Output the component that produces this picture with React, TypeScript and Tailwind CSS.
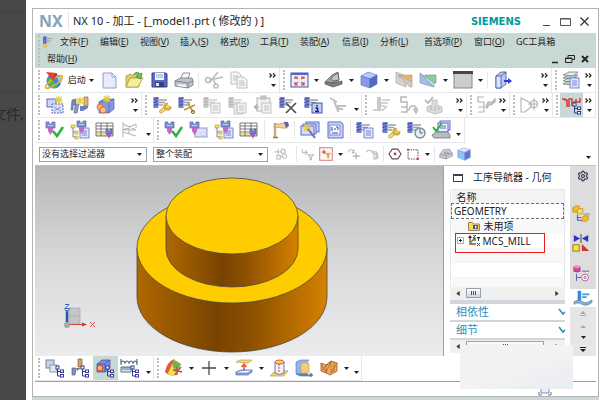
import React from 'react';
import { Settings } from 'lucide-react';

const BLUE = '#5f6ec6';
const GRAY = '#c0c0c0';

// Shared parts of the machining icons
const Mill = ({ off = false }: { off?: boolean }) => (
  <g>
    <rect x="1.5" y="2" width="5" height="11" fill={off ? '#cacaca' : '#7480cd'} />
    <path d="M1.5 4.5l5-1.5M1.5 7.5l5-1.5M1.5 10.5l5-1.5" stroke={off ? '#b2b2b2' : '#3f4ba2'} strokeWidth="1" />
    <path d="M7 5h8M7 7.5h6M7 10h4" stroke={off ? '#d0d0d0' : '#9ba0a8'} strokeWidth="1.3" />
  </g>
);

const Wrench = () => (
  <g fill="none" strokeLinecap="round">
    <path d="M9 16.5l6-5" stroke="#b8943c" strokeWidth="3.6" />
    <path d="M9 16.5l6-5" stroke="#f6da6b" strokeWidth="2.4" />
    <path d="M15 8.500a3 3 0 1 0 3.500 3.500" stroke="#d0aa40" strokeWidth="2.200" />
  </g>
);

const Holder = () => (
  <g>
    <path d="M1 2h3v2h3v-2h3v6h-9z" fill="#8490d0" stroke="#5a66a8" strokeWidth=".7" />
    <path d="M3 8h5v3l-2.500 4l-2.500-4z" fill="#c06cc4" />
    <path d="M3 5.500h5" stroke="#c3c9ef" />
  </g>
);

const Doc = ({ off = false, x = 9, y = 8 }: { off?: boolean; x?: number; y?: number }) => (
  <g stroke={off ? '#b6b6b6' : BLUE} strokeWidth=".8">
    <rect x={x} y={y} width="9" height="10" fill={off ? '#f4f4f4' : '#e3e7fa'} />
    <path d={`M${x + 2} ${y + 3}h5M${x + 2} ${y + 5}h5M${x + 2} ${y + 7}h5`} />
  </g>
);

const Tree = () => (
  <g fill="#fff" stroke="#353b94" strokeWidth="1">
    <path d="M12.500 10v8h3M12.500 13.500h3" fill="none" />
    <rect x="11" y="8" width="3" height="3" />
    <rect x="15.500" y="12" width="3" height="2.500" />
    <rect x="15.500" y="16.500" width="3" height="2.500" />
  </g>
);

const Check = () => <path d="M8 11l4 5l6-9" fill="none" stroke="#2fb344" strokeWidth="2.600" />;

const Star = ({ x = 13, y = 5 }: { x?: number; y?: number }) => (
  <path d={`M${x - 4} ${y}h8M${x} ${y - 4}v8M${x - 3} ${y - 3}l6 6M${x + 3} ${y - 3}l-6 6`} stroke="#e5cf35" strokeWidth="1.200" />
);

const Cube = () => (
  <g stroke="#5369b9" strokeWidth=".6">
    <path d="M2 6l7-4l9 3l-7 4z" fill="#b8c8fa" />
    <path d="M2 6l9 3v9l-9-3z" fill="#879ce9" />
    <path d="M11 9l7-4v9l-7 4z" fill="#5069c9" />
  </g>
);

const Grid = () => (
  <g>
    <rect x="1" y="3" width="17" height="12" fill="#fff" />
    <path d="M1 13h17v3h-17z" fill="#f1e275" />
    <path d="M1 3h17M1 6h17M1 9h17M1 12h17M1 16h17M1 3v13M6 3v13M12 3v13M18 3v13" stroke="#6b6b6b" strokeWidth=".9" />
    <path d="M11 9h2v2h2v-2h2v5h-6z" fill="#7583c5" stroke="#48549b" strokeWidth=".6" />
    <path d="M12 14h4l-2 5z" fill="#b84ec4" />
  </g>
);

const icons: Record<string, React.ReactNode> = {
  start: (
    <g>
      <circle cx="10" cy="11" r="7.500" fill="#3f86d8" />
      <path d="M4 9q4-4 5 1t5 4q-2 5-6 4q-5-2-4-9z" fill="#58b847" />
      <path d="M13 5q5 3 4 9q-3-2-4-9z" fill="#a8d6f5" />
      <ellipse cx="10" cy="12" rx="10" ry="3" transform="rotate(-35 10 12)" fill="none" stroke="#e4ac2e" strokeWidth="1.500" />
      <path d="M2 2l11 1l-4 8z" fill="#e0433f" />
      <path d="M13 3l-2 2l-2 6z" fill="#9b1f24" />
    </g>
  ),
  newFile: <path d="M4 3h9l4 4v11h-13zM13 3v4h4" fill="#e9ebfb" stroke="#969bd4" />,
  open: (
    <g stroke="#a99832" strokeWidth=".8">
      <path d="M2 17v-11l5-2l2 2h6v11z" fill="#e3cf61" />
      <path d="M2 17l4-9h13l-5 9z" fill="#f7ec9c" />
      <path d="M9 5q4-5 7-1l2-1l-1 6l-5-2l2-1q-2-3-5-1z" fill="#72bd52" stroke="#4b973a" />
    </g>
  ),
  save: (
    <g>
      <path d="M3 3h14l1 1v13h-15z" fill="#5c6ab9" stroke="#33428f" />
      <rect x="6" y="3" width="9" height="7" fill="#f1f4ff" />
      <path d="M7 5h7M7 7h7" stroke="#8da5d8" />
      <rect x="6" y="12" width="9" height="5" fill="#36407a" />
      <rect x="7" y="13" width="3" height="3" fill="#e2e5f5" />
    </g>
  ),
  print: (
    <g stroke="#737780" strokeWidth=".8">
      <path d="M6 10l3-7h7l-3 8z" fill="#f8faff" />
      <path d="M1 11l5-3h12l1 3v4l-5 3l-13-2z" fill="#bfc3cb" />
      <path d="M1 11l13 2l5-2M14 13v5" fill="none" />
      <path d="M4 15l8 1" stroke="#f9f9f9" strokeWidth="2" />
    </g>
  ),
  cut: (
    <g fill="none" stroke="#bcbcbc" strokeWidth="1.600">
      <path d="M5 13l9-11M6 10l13-3M9 9l3 6" />
      <circle cx="4" cy="10" r="2.500" /><circle cx="12" cy="16" r="2" />
    </g>
  ),
  copy: (
    <g fill="#f3f3f3" stroke="#c2c2c2">
      <path d="M2 2h7l3 3v9h-10zM4 6h5M4 8h5M4 10h5" /><path d="M8 7h7l3 3v8h-10zM10 11h5M10 13h6M10 15h6" />
    </g>
  ),
  fit: (
    <g>
      <rect x="2" y="3" width="17" height="14" fill="#e8efff" stroke="#3c55bd" />
      <path d="M2 4h17" stroke="#4c67d0" strokeWidth="2" />
      <path d="M9 9l-3-2M12 9l3-2M9 12l-3 3M12 12l3 3M6 9v-2h3M12 7h3v2M6 12v3h3M12 15h3v-3" stroke="#e04b3c" strokeWidth="1.200" fill="none" />
    </g>
  ),
  shade: (
    <g stroke="#505457" strokeWidth=".7">
      <path d="M1 12l7-7l6-3l1 8l-5 3z" fill="#9da1a3" />
      <path d="M7 9q2-4 7-6l1 7l-6 1z" fill="#c2c5c7" />
      <path d="M1 12l8 1l9-2v3l-9 3l-8-3z" fill="#7b7f81" />
    </g>
  ),
  cube: <Cube />,
  section: (
    <g stroke="#b9a190" strokeWidth=".7">
      <path d="M2 2l10 4v11l-10-4z" fill="#d6d2cf" />
      <path d="M5 5h13v7h-5l-1-3l-7-2z" fill="#e8b36e" />
      <path d="M4 5l12 12h2v-5z" fill="#d5c9c2" />
    </g>
  ),
  clip: (
    <g stroke="#8295be" strokeWidth=".7">
      <path d="M7 5h11v8h-11z" fill="#88cf91" />
      <path d="M2 3l14 14v-4z" fill="#dce2ef" />
      <path d="M2 3v10l14 4z" fill="#a6bce0" />
    </g>
  ),
  viewport: (
    <g>
      <rect x="1" y="2" width="18" height="16" fill="#cdcdcd" stroke="#888" />
      <rect x="0" y="1" width="20" height="3" fill="#464646" />
    </g>
  ),
  exit: (
    <g stroke="#40509f" strokeWidth=".8">
      <path d="M3 6l5-4h5v12l-5 4h-5z" fill="#b9c8f0" />
      <path d="M3 6h5v12h-5zM8 6l5-4" fill="#dce4fb" />
      <path d="M11 10h4v-2l4 3l-4 3v-2h-4z" fill="#3435d9" stroke="none" />
    </g>
  ),
  layers: (
    <g stroke="#6d8078" strokeWidth=".8">
      <path d="M2 14l6-3h9l-5 4z" fill="#c2d8cb" /><path d="M2 11l6-3h9l-5 4z" fill="#d9e7df" />
      <path d="M2 8l6-3h9l-5 4z" fill="#b9cfc4" /><path d="M2 5l6-3h9l-5 4z" fill="#e3ece7" />
      <Doc x={9} y={8} />
    </g>
  ),
  newProg: (
    <g>
      <rect x="2" y="4" width="9" height="8" fill="#cbd5f5" stroke={BLUE} /><Star x={14} y={5} />
      <rect x="7" y="9" width="11" height="9" fill="#d8dffa" stroke={BLUE} strokeDasharray="2 1" />
      <path d="M9 12l7 4M9 16l7-4" stroke="#8e9ad6" />
    </g>
  ),
  newTool: (
    <g>
      <path d="M2 5l4-1v6h-3v5h-2z" fill="#7a86b8" stroke="#566092" strokeWidth=".6" />
      <path d="M5 10l4-1l-2 9h-3z" fill="#8f9cc4" stroke="#566092" strokeWidth=".6" />
      <path d="M14 2h4v9h-4z" fill="#e6bb67" stroke="#806842" strokeWidth=".7" />
      <path d="M10 11h8v2l-5 3h-3z" fill="#6a7fc0" /><Star x={10} y={6} />
    </g>
  ),
  newGeom: (
    <g>
      <path d="M4 7l5-3h10v10l-5 4h-10z" fill="#8799e5" stroke="#4b5ba5" strokeWidth=".7" />
      <path d="M4 7h10v11M14 7l5-3" fill="none" stroke="#4b5ba5" strokeWidth=".7" />
      <circle cx="5" cy="12" r="3" fill="#ffb04f" stroke="#e26a4a" />
      <circle cx="8" cy="15" r="3" fill="#ffc98a" stroke="#e26a4a" /><Star x={12} y={4} />
    </g>
  ),
  editOp: <g><Mill /><Wrench /></g>,
  cutOp: (
    <g>
      <Mill />
      <path d="M7 15l11-5M11 8l5 9" stroke="#c19b38" strokeWidth="1.800" />
      <circle cx="16" cy="17" r="1.600" fill="none" stroke="#806321" />
    </g>
  ),
  copyOp: <g><Mill off /><Doc off x={9} y={8} /></g>,
  pasteOp: <g><Mill off /><Doc off x={7} y={9} /><Doc off x={10} y={8} /></g>,
  clipboard: (
    <g stroke="#b5b5b5" fill="#f0f0f0">
      <rect x="4" y="3" width="13" height="13" /><rect x="8" y="1" width="5" height="3" fill="#c8c8c8" />
      <Doc off x={9} y={8} /><path d="M1 12h5M4 9v6l-3-3z" fill="#b5b5b5" />
    </g>
  ),
  deleteOp: <g><Mill /><path d="M8 8l10 10M18 8l-10 10" stroke="#4f5051" strokeWidth="1.700" /></g>,
  infoOp: (
    <g>
      <Mill />
      <rect x="9" y="8" width="10" height="10" fill="#c3ccf5" stroke="#4454a8" />
      <path d="M14 10v1.500M12.500 13h2v3.500M12 16.500h4" stroke="#1d2874" strokeWidth="1.600" />
    </g>
  ),
  display: (
    <g fill="none" stroke={GRAY} strokeWidth="2">
      <path d="M2 3l7 4M6 6l4 10M10 17v-6h8M10 14h5" />
    </g>
  ),
  generate: (
    <g>
      <path d="M5 2h4v11l-2 4l-2-3z" fill="#c8c8c8" />
      <path d="M10 5h8M9 8h7M9 11h4M1 15h10l4-4" stroke="#c6c6c6" strokeWidth="1.600" fill="none" />
    </g>
  ),
  replay: (
    <g fill="none" stroke="#b8b8b8" strokeWidth="1.500">
      <path d="M9 2h-6v5h6v5h-6M9 12v5h-6" />
      <path d="M11 16q0-5 4-5t3 4M16 14h4l-2 4z" />
    </g>
  ),
  verify: (
    <g>
      <path d="M2 5l3 3l5-6" fill="none" stroke="#b8b8b8" strokeWidth="1.800" />
      <path d="M4 12l5-2v-5h5v5l5 2v5l-7 2l-8-3z" fill="#dadada" stroke="#c4c4c4" />
      <path d="M8 15v-4M12 16v-5M16 15v-3" stroke="#b5b5b5" />
    </g>
  ),
  post: (
    <g fill="none" stroke="#b2b2b2" strokeWidth="1.200">
      <path d="M8 2h-6v5h6v5h-6M8 12v5h-6" />
      <path d="M10 12l2-5h4l3-3v3l-4 3h-2l-2 3z" fill="#ccc" />
    </g>
  ),
  axis: (
    <g fill="none" stroke="#b2b2b2" strokeWidth="1.100">
      <path d="M2 3v14h4l6-5v-4l-6-3zM9 9h10M15 3v12" /><circle cx="15" cy="9" r="3.500" />
    </g>
  ),
  path: (
    <g>
      <path d="M0 4h3v1h2v7M7 12v-8h3v7M12 11v-4h2v-3M14 7h4v-4" fill="none" stroke="#d93535" strokeWidth="1.500" />
      <Tree />
    </g>
  ),
  holderCheck: <g><Holder /><Check /></g>,
  holderCard: <g><rect x="6" y="8" width="12" height="9" fill="#dce1f6" stroke="#8f9bd0" /><path d="M12 13h4v2h-4z" fill="#fff" stroke="#a1abd7" strokeWidth=".5" /><Holder /></g>,
  holderTree: (
    <g>
      <path d="M3 7v10h4M3 12h4" fill="none" stroke="#888" />
      <rect x="1" y="5" width="4" height="3" fill="#f5df54" stroke="#9b8a34" strokeWidth=".5" />
      <Doc x={10} y={8} />
      <g transform="translate(6 -1)"><Holder /></g>
      <rect x="5" y="11" width="3" height="3" fill="#f5df54" stroke="#9b8a34" strokeWidth=".5" />
      <rect x="5" y="16" width="3" height="3" fill="#f5df54" stroke="#9b8a34" strokeWidth=".5" />
    </g>
  ),
  grid: <Grid />,
  wire: (
    <g fill="none" stroke="#b8b8b8" strokeWidth="1.100">
      <path d="M3 2v15M3 4l13 6h-13l13-6M3 12l13 4M9 7v8M16 4v4" />
    </g>
  ),
  flag: (
    <g>
      <path d="M5 3v14" stroke="#c9ab7e" strokeWidth="2.500" /><path d="M3 17.500h5" stroke="#8f7a5a" strokeWidth="1.500" />
      <path d="M5 4h5l5-2l2 6h-5l-7-1z" fill="#f4d29c" stroke="#b08f62" strokeWidth=".7" />
      <path d="M14 2l4 0l1 4l-3 2z" fill="#5965a8" />
    </g>
  ),
  wand: (
    <g>
      <rect x="6" y="2" width="13" height="10" fill="#cbd4f8" stroke={BLUE} />
      <rect x="3" y="4" width="13" height="10" fill="#e2e8fc" stroke={BLUE} />
      <rect x="1" y="6" width="13" height="9" fill="#d3dcf9" stroke={BLUE} />
      <Star x={7} y={8} /><path d="M8 9l7 9" stroke="#6473b5" strokeWidth="2" />
    </g>
  ),
  report: (
    <g>
      <path d="M3 2h13l2 2v14h-15z" fill="#ced6f7" stroke={BLUE} />
      <rect x="5" y="5" width="10" height="10" fill="#f9faff" stroke="#7d8bd2" />
      <path d="M7 7v4M9 9h2M11 7h2v3M7 13h6" stroke="#33479c" />
    </g>
  ),
  listOp: <g><Mill /><Doc x={9} y={8} /></g>,
  clockOp: (
    <g>
      <Mill /><circle cx="14" cy="13" r="5" fill="#e8edf3" stroke="#7b8b9c" strokeWidth="1.400" />
      <path d="M14 9v4h3" fill="none" stroke="#596978" />
    </g>
  ),
  machine: (
    <g>
      <rect x="9" y="1" width="10" height="9" fill="#dfe4fb" stroke={BLUE} />
      <rect x="7" y="3" width="10" height="9" fill="#eef1ff" stroke={BLUE} />
      <path d="M9 6h6M9 8h6" stroke={BLUE} />
      <path d="M1 15l4-3h12l2 3v3h-16z" fill="#b9bcc0" stroke="#6f7377" strokeWidth=".8" />
      <path d="M2 7l3 4l6-8" fill="none" stroke="#2fb344" strokeWidth="2" />
    </g>
  ),
  chain: (
    <g fill="none" stroke={GRAY} strokeWidth="1.600">
      <path d="M1 7h7M6 3v7M4 12h5v5h-5z" /><circle cx="13" cy="6" r="3" /><circle cx="15" cy="13" r="3" /><path d="M9 7h2M9 14h3" />
    </g>
  ),
  undoFilter: <g fill="none" stroke={GRAY} strokeWidth="1.600"><path d="M2 3v5h7M6 5l3 3l-3 3M10 11h8l-3 3v4h-2v-4z" /></g>,
  addFilter: (
    <g>
      <rect x="1" y="1" width="18" height="18" fill="#fff7f7" stroke="#e27d7d" strokeWidth="1.500" />
      <path d="M4 7h6M7 4v6" stroke="#b94545" strokeWidth="1.500" />
      <path d="M9 9h8l-3 3v4l-2-1v-3z" fill="#f2b33c" stroke="#ab7416" strokeWidth=".5" />
    </g>
  ),
  moveSel: <g fill="none" stroke="#b8b8b8" strokeWidth="1.500"><path d="M2 8q0-5 5-4l3 3M7 8l3 0v-4M8 13h11M13 8v10M11 13l2-2l2 2l-2 2z" /></g>,
  dragSel: <g fill="none" stroke="#c0c0c0" strokeWidth="1.800"><path d="M2 7q3-4 8-1l2 3M9 7h7l2 3M11 10h5v7h-3v-5M18 10v7" /></g>,
  hex: (
    <g>
      <path d="M6 3h8l4.500 7l-4.500 7h-8l-4.500-7z" fill="#fff" stroke="#555" strokeWidth="1.600" />
      <circle cx="10" cy="10" r="2" fill="#d93333" />
    </g>
  ),
  rectSel: (
    <g>
      <rect x="3" y="4" width="14" height="13" fill="none" stroke="#4e4e4e" strokeWidth="1.500" strokeDasharray="2 1.500" />
      <path d="M1.500 2.500h3v3h-3zM15.500 15.500h3v3h-3z" fill="#dc4848" />
    </g>
  ),
  grayCube: (
    <g stroke="#7a7e89" strokeWidth=".8">
      <path d="M1 11l5-7l9-1l4 6v4l-9 4l-9-2z" fill="#c8ccd7" />
      <path d="M1 11l9 1l9-3M10 12v5" fill="none" /><path d="M7 9q3-4 7 0z" fill="#fff" stroke="#a54b4b" />
    </g>
  ),
  blueCube: (
    <g stroke="#6a8bd0" strokeWidth=".6">
      <path d="M1 5l8-4l10 3l-8 4z" fill="#dbe9ff" /><path d="M1 5l10 3v11l-10-4z" fill="#8cc3f7" />
      <path d="M11 8l8-4v11l-8 4z" fill="#5a76da" /><path d="M1 5l10 3l8-4" fill="none" stroke="#e08fa0" />
    </g>
  ),
  progView: (
    <g>
      <rect x="1" y="2" width="8" height="8" fill="#cad3e3" stroke="#7684a2" /><rect x="5" y="7" width="7" height="7" fill="#e3e8f1" stroke="#8a96ad" /><Tree />
    </g>
  ),
  toolView: (
    <g>
      <path d="M8 1h4v8h-4z" fill="#d9a45b" stroke="#80603e" strokeWidth=".7" /><path d="M2 10h4l-1 7h-3z" fill="#8292b8" stroke="#56688c" strokeWidth=".7" />
      <path d="M6 10h5l-4 3z" fill="#7f7f88" /><Tree />
    </g>
  ),
  geomView: (
    <g>
      <path d="M2 6l5-4h8v8l-5 4h-8z" fill="#7c90e1" stroke="#34479e" strokeWidth=".7" /><path d="M2 6h8l5-4M10 6v8" stroke="#34479e" strokeWidth=".7" fill="none" />
      <circle cx="5" cy="10" r="3" fill="#ffb04f" stroke="#dc3c2e" /><Tree />
    </g>
  ),
  methodView: (
    <g>
      <path d="M1 1v6M17 1v6M1 5q2-4 4 0q2-4 4 0q2-4 4 0q2-4 4 0" fill="none" stroke="#51708b" strokeWidth="1.200" />
      <path d="M1 9h10v5h-10zM3 9v3M5 9v3M7 9v3M9 9v3" fill="#dcebf4" stroke="#51708b" /><Tree />
    </g>
  ),
  analysis: (
    <g>
      <path d="M1 14q2-10 9-13l7 5l-7 12q-6 0-9-4z" fill="#edbd46" /><path d="M1 14q2-10 9-13l-2 6l-4 9z" fill="#e2593f" />
      <path d="M9 2l8 4l-4 8l-4-5z" fill="#62b84e" /><path d="M4 15l4-8l3 6l-2 5z" fill="#f5e348" />
      <path d="M13 9v8M9 12l9 2M17 9l-6 8" stroke="#c34b46" strokeWidth="1.300" />
    </g>
  ),
  plus: <path d="M3 10h14M10 3v14" stroke="#4b4b4b" strokeWidth="1.300" />,
  offset: (
    <g>
      <path d="M2 4l4-2h12l-4 3z" fill="#f7d77a" stroke="#c99a45" strokeWidth=".7" /><path d="M10 6v7M7.500 9l2.500-3l2.500 3" fill="none" stroke="#e86232" strokeWidth="1.700" />
      <path d="M2 14l5-2h11l-4 3h-12zM2 14v3h12l4-3v-2" fill="#91a9ec" stroke="#5067b5" strokeWidth=".7" />
    </g>
  ),
  extrude: (
    <g>
      <path d="M1 18l5-5h13l-4 5z" fill="#f3d56a" stroke="#c39b38" strokeWidth=".7" />
      <path d="M6 4v11q4 3 9 0v-11" fill="#f7eef4" stroke="#6671d1" /><path d="M10 6v8" stroke="#d44" strokeDasharray="2 1" />
      <ellipse cx="10.500" cy="4" rx="4.500" ry="2" fill="#ffd45f" stroke="#dd4d3f" />
    </g>
  ),
  block: (
    <g stroke="#6685b9" strokeWidth=".7">
      <path d="M2 4l4-2h9l-2 2v12h-11z" fill="#8fb6e6" /><path d="M7 5h8v10h-8z" fill="#f5cd72" stroke="#c9a35c" /><path d="M2 16h11l3 2h-10z" fill="#4f7fc0" /><circle cx="17" cy="17" r="1.500" fill="#5a6ca8" />
    </g>
  ),
  ribs: (
    <g stroke="#9e4e2e" strokeWidth=".8">
      <path d="M2 5l5 2l5-4l6 2v8l-7 4l-4-2l-5-2z" fill="#e9b252" />
      <path d="M2 5l5 10l5-12v12l6-10M7 7v8M2 13l10-10M15 4v10" fill="none" stroke="#b85b39" />
    </g>
  ),
  partNav: (
    <g>
      <path d="M6 11v6h5M6 14h4" fill="none" stroke="#3c41b8" />
      <path d="M1 3l3-2h4v5l-3 2h-4zM11 14l2-2h5v4l-2 2h-5z" fill="#f5bd25" stroke="#b37a0a" strokeWidth=".7" />
      <path d="M6 6l2-2h4v4l-2 2h-4z" fill="#ffdc66" stroke="#b37a0a" strokeWidth=".7" /><path d="M12 10h8" stroke="#888" />
    </g>
  ),
  constraint: (
    <g>
      <path d="M2 1l7 4l-7 4zM18 1l-7 4l7 4z" fill="#2b35c4" /><path d="M10 0v10" stroke="#343434" />
      <rect x="1" y="12" width="7" height="7" fill="#ffe33c" stroke="#81731f" /><path d="M11 11l8 8h-8z" fill="#d63324" />
    </g>
  ),
  history: (
    <g>
      <path d="M2 3v5q3.500 2 7 0v-5" fill="#d64b9c" stroke="#82305e" strokeWidth=".7" /><ellipse cx="5.500" cy="3" rx="3.500" ry="1.500" fill="#f08ec3" />
      <path d="M5 11v8M5 15h5M11 8h8" stroke="#5857b1" fill="none" /><circle cx="14.500" cy="15" r="3.800" fill="#fff" stroke="#b25297" /><circle cx="14.500" cy="15" r="1.300" fill="none" stroke="#b25297" />
    </g>
  ),
  opNav: (
    <g>
      <path d="M4 2h4v11h-4z" fill="#3c8bd2" /><path d="M9 6h8M9 9h5" stroke="#4a98d8" strokeWidth="2" />
      <path d="M0 14q5-3 9 0t11-2v3q-6 5-11 2t-9 0z" fill="#7cb2db" stroke="#596d7a" strokeWidth=".6" />
    </g>
  ),
  menuLogo: <g><Mill /><path d="M1 14h7v4h-7z" fill="#e8c44a" /></g>,
};

const Glyph = ({ name, size = 'h-5 w-5' }: { name: string; size?: string }) => (
  <svg viewBox="0 0 20 20" className={`${size} shrink-0`} fill="none" aria-hidden="true">{icons[name]}</svg>
);

const Btn = ({ icon, active = false }: { icon: string; active?: boolean }) => (
  <button aria-label={icon} className={`flex min-w-0 flex-1 items-center justify-center ${active ? 'bg-[#c8d8d5]' : ''}`}>
    <Glyph name={icon} />
  </button>
);

const SmallBtn = ({ icon }: { icon: string }) => (
  <button aria-label={icon} className="flex w-[18px] shrink-0 items-center justify-center">
    <Glyph name={icon} size="h-[14px] w-[14px]" />
  </button>
);

const Triangle = () => (
  <svg viewBox="0 0 5 3" className="h-[3px] w-[5px]" aria-hidden="true"><path d="M0 0h5l-2.500 3z" fill="#222" /></svg>
);

const Caret = ({ low = false }: { low?: boolean }) => (
  <button aria-label="more" className={`flex w-[10px] shrink-0 justify-center ${low ? 'items-end pb-[6px]' : 'items-center'}`}>
    <Triangle />
  </button>
);

const Sep = () => <div className="mx-[2px] my-[3px] w-px shrink-0 bg-gray-200" />;

const Grip = () => <div className="my-[2px] ml-[3px] mr-[2px] w-0 shrink-0 border-l-2 border-dotted border-[#bcbcbc]" />;

const Overflow = ({ width = 'w-3' }: { width?: string }) => (
  <button aria-label="toolbar options" className={`${width} flex shrink-0 flex-col items-end justify-between py-[5px] pr-[3px]`}>
    <svg viewBox="0 0 7 5" className="h-[5px] w-[7px]" aria-hidden="true">
      <path d="M.5 .5l2 2l-2 2M4 .5l2 2l-2 2" fill="none" stroke="#222" strokeWidth="1.200" />
    </svg>
    <Triangle />
  </button>
);

const Group = ({ width, children }: { width: string; children: React.ReactNode }) => (
  <div className={`flex h-[25px] border-b border-r border-gray-200 ${width}`}>
    <Grip />
    {children}
  </div>
);

const menus = [
  { text: '文件', key: 'F', width: 'w-10' },
  { text: '编辑', key: 'E', width: 'w-10' },
  { text: '视图', key: 'V', width: 'w-10' },
  { text: '插入', key: 'S', width: 'w-10' },
  { text: '格式', key: 'R', width: 'w-10' },
  { text: '工具', key: 'T', width: 'w-10' },
  { text: '装配', key: 'A', width: 'w-[42px]' },
  { text: '信息', key: 'I', width: 'w-[38px]' },
  { text: '分析', key: 'L', width: 'w-11' },
  { text: '首选项', key: 'P', width: 'w-[50px]' },
  { text: '窗口', key: 'O', width: 'w-[42px]' },
];

const MenuItem = ({ text, shortcut, width = '' }: { text: string; shortcut: string; width?: string }) => (
  <button className={`${width} shrink-0 whitespace-nowrap text-left`}>
    {text}(<span className="underline">{shortcut}</span>)
  </button>
);

const TitleBar = () => (
  <header className="flex h-6 shrink-0 items-center pl-1 pr-[6px]">
    <span className="w-[29px] text-[16px] font-bold leading-5 text-[#8aa3b5]">NX</span>
    <span className="h-[18px] w-px bg-gray-200" />
    <h1 className="ml-1 whitespace-nowrap text-[11px]">NX 10 - 加工 - [_model1.prt ( 修改的 ) ]</h1>
    <span className="ml-auto mr-5 font-['DejaVu_Sans',sans-serif] text-[10px] font-bold text-[#009999]">SIEMENS</span>
    <div className="flex items-center gap-2">
      <button aria-label="minimize">
        <svg viewBox="0 0 11 11" className="h-[11px] w-[11px]"><path d="M2 9.500h7" stroke="#444" /></svg>
      </button>
      <button aria-label="maximize">
        <svg viewBox="0 0 11 11" className="h-[11px] w-[11px]"><path d="M.5 2.500h10v7h-10zM.5 3h10" fill="none" stroke="#555" /></svg>
      </button>
      <button aria-label="close">
        <svg viewBox="0 0 11 11" className="h-[11px] w-[11px]"><path d="M1.500 1.500l8 8M9.500 1.500l-8 8" stroke="#333" strokeWidth="1.300" /></svg>
      </button>
    </div>
  </header>
);

const MenuBar = () => (
  <nav className="flex shrink-0 bg-[#c8d8d5] text-[9px] leading-3">
    <Grip />
    <div className="min-w-0 flex-1">
      <div className="flex h-[18px] items-center">
        <span className="w-[18px] shrink-0"><Glyph name="menuLogo" size="h-[14px] w-[14px]" /></span>
        {menus.map((m) => <MenuItem key={m.key} text={m.text} shortcut={m.key} width={m.width} />)}
        <button className="whitespace-nowrap">GC工具箱</button>
      </div>
      <div className="flex h-[17px] items-center justify-between pb-px pl-[5px] pr-[6px]">
        <MenuItem text="帮助" shortcut="H" />
        <div className="flex items-center gap-[5px]">
          <button aria-label="minimize part">
            <svg viewBox="0 0 10 10" className="h-[10px] w-[10px]"><path d="M2 8.500h6" stroke="#222" strokeWidth="1.500" /></svg>
          </button>
          <button aria-label="restore part">
            <svg viewBox="0 0 10 10" className="h-[10px] w-[10px]"><path d="M3 3.500v-2h6.500v4h-2M.5 4h6.500v4.500h-6.500zM.5 4.500h6.500" fill="none" stroke="#222" /></svg>
          </button>
          <button aria-label="close part">
            <svg viewBox="0 0 10 10" className="h-[10px] w-[10px]"><path d="M2 2l6 6M8 2l-6 6" stroke="#222" strokeWidth="1.800" /></svg>
          </button>
        </div>
      </div>
    </div>
  </nav>
);

const FilterSelect = ({ label, value, width }: { label: string; value: string; width: string }) => (
  <div className={`relative flex h-[15px] shrink-0 items-center ${width}`}>
    <select aria-label={label} className="h-full w-full appearance-none border border-gray-400 bg-white pl-[2px] text-[9px] leading-3">
      <option>{value}</option>
    </select>
    <span className="pointer-events-none absolute right-[5px] flex"><Triangle /></span>
  </div>
);

const Toolbars = () => (
  <div className="shrink-0">
    <div className="flex">
      <Group width="w-[245px]">
        <Btn icon="start" />
        <button className="w-5 shrink-0 whitespace-nowrap text-[9px]">启动</button>
        <Caret />
        <Btn icon="newFile" /><Btn icon="open" /><Btn icon="save" /><Btn icon="print" />
        <Sep />
        <Btn icon="cut" /><Btn icon="copy" />
        <Overflow width="w-7" />
      </Group>
      <Group width="w-[272px]">
        <Btn icon="fit" /><Caret />
        <Btn icon="shade" /><Caret />
        <Btn icon="cube" /><Caret />
        <Btn icon="section" /><Btn icon="clip" /><Caret />
        <Btn icon="viewport" /><Caret />
        <Sep />
        <Btn icon="exit" />
        <Overflow width="w-9" />
      </Group>
      <Group width="flex-1"><Btn icon="layers" /><Overflow /></Group>
    </div>
    <div className="flex">
      <Group width="w-[107px]">
        <Btn icon="newProg" /><Btn icon="newTool" /><Btn icon="newGeom" />
        <Overflow width="w-6" />
      </Group>
      <Group width="w-[220px]">
        <Btn icon="editOp" /><Btn icon="cutOp" /><Btn icon="copyOp" /><Btn icon="pasteOp" />
        <Btn icon="clipboard" /><Btn icon="deleteOp" /><Btn icon="infoOp" /><Btn icon="display" />
        <Caret low />
      </Group>
      <Group width="w-[105px]">
        <Btn icon="generate" /><Btn icon="replay" /><Btn icon="verify" />
        <Overflow width="w-5" />
      </Group>
      <Group width="w-[43px]"><Btn icon="post" /><Overflow /></Group>
      <Group width="w-[43px]"><Btn icon="axis" /><Overflow /></Group>
      <Group width="flex-1"><Btn icon="path" active /><Overflow /></Group>
    </div>
    <div className="flex">
      <Group width="w-[119px]">
        <Btn icon="holderCheck" /><Btn icon="holderTree" /><Btn icon="grid" /><Btn icon="wire" />
        <Caret low />
      </Group>
      <Group width="w-[311px]">
        <Btn icon="holderCheck" /><Btn icon="holderCard" /><Btn icon="holderTree" /><Btn icon="grid" />
        <Sep />
        <Btn icon="flag" />
        <Sep />
        <Btn icon="wand" /><Btn icon="report" />
        <Sep />
        <Btn icon="listOp" /><Btn icon="editOp" /><Btn icon="clockOp" /><Btn icon="machine" />
        <Caret low />
      </Group>
    </div>
    <div className="flex h-[23px] items-stretch border-b border-[#b4c8c5] pl-1">
      <div className="flex items-center gap-[6px]">
        <FilterSelect label="选择过滤器" value="没有选择过滤器" width="w-[108px]" />
        <FilterSelect label="选择范围" value="整个装配" width="w-[115px]" />
      </div>
      <div className="flex px-1"><SmallBtn icon="chain" /></div>
      <Sep />
      <SmallBtn icon="undoFilter" /><SmallBtn icon="addFilter" /><Caret /><SmallBtn icon="moveSel" /><SmallBtn icon="dragSel" />
      <Sep />
      <SmallBtn icon="hex" /><SmallBtn icon="rectSel" /><Caret />
      <Sep />
      <SmallBtn icon="grayCube" /><SmallBtn icon="blueCube" />
      <div className="ml-auto mr-[3px] flex"><Caret low /></div>
    </div>
  </div>
);

const Model = () => (
  <svg viewBox="35 166 408 190" className="block w-full" role="img" aria-label="model">
    <defs>
      <linearGradient id="side" x1="0" x2="1">
        <stop offset="0" stopColor="#b06800" />
        <stop offset=".42" stopColor="#784300" />
        <stop offset=".6" stopColor="#8c5000" />
        <stop offset="1" stopColor="#d68100" />
      </linearGradient>
    </defs>
    <g stroke="#4a4a3c" strokeWidth=".8">
      <path d="M137 248v49a95 55 0 0 0 190 0v-49z" fill="url(#side)" />
      <ellipse cx="232" cy="248" rx="95" ry="55" fill="#ffcc00" />
      <path d="M166 216v33a66 38 0 0 0 132 0v-33z" fill="url(#side)" />
      <ellipse cx="232" cy="216" rx="66" ry="38" fill="#ffcc00" />
    </g>
    <path d="M69 308h11v16h-11zM69 316h11" fill="#c5c6c8" stroke="#a5a5a8" strokeWidth=".7" />
    <path d="M67 324v-14" stroke="#2453b5" strokeWidth="2.500" />
    <path d="M67 324.500h17" stroke="#cc4444" />
    <path d="M82 322.500l5 2l-5 2z" fill="#cc3333" />
    <path d="M90 322l5 5M95 322l-5 5" stroke="#d94a4a" />
    <path d="M65 304.500h4l-4 4h4" stroke="#3c62e0" fill="none" />
    <path d="M64 308l3 4l3-4" stroke="#4aa05a" fill="none" strokeWidth=".8" />
    <circle cx="67" cy="325" r="3" fill="#a7a9ad" />
  </svg>
);

const ScrollBar = ({ thumb }: { thumb: string }) => (
  <div className="flex h-[13px] items-center bg-[#f0f0f0] px-[6px]">
    <svg viewBox="0 0 4 6" className="h-[5px] w-1"><path d="M4 0v6l-4-3z" fill="#333" /></svg>
    <button aria-label="scroll" className={`${thumb} ml-[6px] flex h-[10px] items-center justify-center gap-px border border-gray-400 bg-gradient-to-b from-white to-gray-300`}>
      <span className="h-1 w-px bg-gray-600" /><span className="h-1 w-px bg-gray-600" /><span className="h-1 w-px bg-gray-600" />
    </button>
    <svg viewBox="0 0 4 6" className="ml-auto h-[5px] w-1"><path d="M0 0v6l4-3z" fill="#333" /></svg>
  </div>
);

const Section = ({ title }: { title: string }) => (
  <button className="flex h-[18px] w-full items-center justify-between border-b-2 border-gray-300 bg-white pl-[6px] text-[11px] leading-4 text-[#2e8cba]">
    {title}
    <svg viewBox="0 0 8 8" className="h-2 w-2"><path d="M2 1l4 5l2-2" fill="none" stroke="#3793bf" strokeWidth="1.800" /></svg>
  </button>
);

const Navigator = () => (
  <section className="w-[127px] shrink-0 border-l border-gray-400 bg-white pl-[6px] pr-[5px]">
    <h2 className="flex h-[23px] items-center gap-[10px] whitespace-nowrap pl-[3px] text-[10px]">
      <span className="h-[8px] w-[10px] border border-t-2 border-gray-700" />
      工序导航器 - 几何
    </h2>
    <div className="relative border-x border-gray-200">
      <table className="w-full border-collapse text-left text-[10px] leading-3">
        <thead>
          <tr><th className="h-[14px] border-t border-gray-200 bg-[#f3f3f3] pl-[5px] font-normal">名称</th></tr>
        </thead>
        <tbody>
          <tr><td className="h-[15px] border border-dashed border-gray-500 pl-[2px]">GEOMETRY</td></tr>
          <tr className="bg-[#f8f8f8]">
            <td className="h-[15px] pl-4">
              <div className="flex items-center gap-1">
                <svg viewBox="0 0 12 10" className="h-[10px] w-3"><path d="M.5 9.500v-8h4l1 1.500h6v6.500z" fill="#f3d66c" stroke="#a8873c" /><path d="M5 4h5v4h-5z" fill="#4b55b5" /><path d="M7 5l1.500 1l-1.500 1" stroke="#fff" fill="none" /></svg>
                未用项
              </div>
            </td>
          </tr>
          <tr>
            <td className="h-[15px] pl-[5px]">
              <div className="flex items-center gap-[3px]">
                <svg viewBox="0 0 7 7" className="h-[7px] w-[7px]"><path d="M.5 .5h6v6h-6z" fill="#fff" stroke="#aaa" /><path d="M2 3.500h3M3.500 2v3" stroke="#222" /></svg>
                <svg viewBox="0 0 13 12" className="h-3 w-[13px]"><path d="M3 2v7h6" fill="none" stroke="#d03030" strokeWidth="1.300" /><path d="M1 3l2-3l2 3z" fill="#222" /><path d="M3 8l5-5M6 5h3" stroke="#2aa244" strokeWidth="1.500" fill="none" /><path d="M6 0h3l-3 3h3" stroke="#222" strokeWidth=".8" fill="none" /><path d="M10 8l3 3M13 8l-3 3M10 2l1.500 2l1.500-2M11.500 4v2" stroke="#333" strokeWidth=".9" /></svg>
                MCS_MILL
              </div>
            </td>
          </tr>
          <tr className="bg-[#f8f8f8]"><td className="h-[14px] border-y border-gray-100" /></tr>
          <tr><td className="h-[15px]" /></tr>
          <tr className="bg-[#f8f8f8]"><td className="h-[9px] border-t border-gray-100" /></tr>
        </tbody>
      </table>
      <div className="pointer-events-none absolute left-[4px] top-[44px] h-5 w-[90px] border border-[#f01818]" />
    </div>
    <ScrollBar thumb="w-[15px]" />
    <div className="h-1 bg-gray-300" />
    <Section title="相依性" />
    <Section title="细节" />
    <ScrollBar thumb="w-[78px]" />
  </section>
);

const ResourceBar = () => (
  <aside className="flex w-[26px] shrink-0 flex-col items-center bg-[#dddddd]">
    <button aria-label="settings" className="flex h-5 items-center"><Settings className="h-3 w-3 text-gray-700" strokeWidth={2.5} /></button>
    <button aria-label="assembly navigator" className="flex h-[47px] items-end pb-[10px] pr-1"><Glyph name="partNav" size="h-[18px] w-[18px]" /></button>
    <button aria-label="constraint navigator" className="flex h-5 items-center pr-1"><Glyph name="constraint" size="h-[18px] w-[18px]" /></button>
    <button aria-label="part navigator" className="flex h-9 items-center pt-1 pr-1"><Glyph name="history" size="h-[18px] w-[18px]" /></button>
    <button aria-label="operation navigator" className="flex h-[18px] w-full items-center justify-center bg-white"><Glyph name="opNav" size="h-[18px] w-5" /></button>
    <div className="flex w-full flex-1 flex-col items-center justify-around bg-[#e6e6e6]">
      <svg viewBox="0 0 6 5" className="h-[5px] w-[6px]"><path d="M3 0l3 3h-6zM0 4h6v1h-6z" fill="#aaa" /></svg>
      <svg viewBox="0 0 6 5" className="h-[5px] w-[6px]"><path d="M3 1l3 3h-6z" fill="#aaa" /></svg>
      <Triangle />
      <svg viewBox="0 0 6 5" className="h-[5px] w-[6px]"><path d="M0 0h6v1h-6zM0 2h6l-3 3z" fill="#222" /></svg>
    </div>
  </aside>
);

const BottomBar = () => (
  <div className="flex shrink-0">
    <Group width="w-[119px]">
      <Btn icon="progView" /><Btn icon="toolView" /><Btn icon="geomView" active /><Btn icon="methodView" />
      <Caret low />
    </Group>
    <Group width="w-[208px]">
      <Btn icon="analysis" /><Caret />
      <Btn icon="plus" /><Caret />
      <Btn icon="offset" /><Caret />
      <Btn icon="extrude" /><Btn icon="block" /><Btn icon="ribs" /><Caret />
      <Caret low />
    </Group>
  </div>
);

const App: React.FC = () => {
  return (
    <div className="flex min-h-screen bg-white font-['Noto_Sans','Noto_Sans_CJK_SC',sans-serif] text-[#222]">
      <aside className="w-[26px] shrink-0 overflow-hidden bg-[#484848]">
        <div className="h-[13px] border-b border-[#404040]" />
        <div className="h-[79px] border-b border-[#404040]" />
        <p className="flex justify-end whitespace-nowrap pr-[2px] pt-3 text-[14px] leading-5 text-[#292929]">文件,</p>
      </aside>
      <div className="flex min-w-0 flex-1 flex-col pl-[6px] pr-px pt-2">
        <main className="relative flex flex-1 flex-col border border-[#b4b4b4] px-[2px]">
          <TitleBar />
          <MenuBar />
          <Toolbars />
          <div className="flex">
            <div className="min-w-0 flex-1 bg-gradient-to-b from-[#b5b7b9] via-[#d8d9db] to-[#ebecee]">
              <Model />
            </div>
            <Navigator />
            <ResourceBar />
          </div>
          <BottomBar />
          <footer className="flex flex-1 items-end justify-end border-t border-gray-400 pr-[44px]">
            <svg viewBox="0 0 14 12" className="h-3 w-[14px]"><path d="M1 8v3h3M10 11h3v-3" fill="none" stroke="#777" /><path d="M3 1h8v8h-8z" fill="#e8f0fa" stroke="#6c93c4" /></svg>
          </footer>
          <div className="absolute bottom-[7px] right-[25px] h-11 w-[113px] bg-gradient-to-br from-[#f1f1f1] via-[#f3f3f3] to-[#e8ebf1]" />
        </main>
        <div className="h-[3px] shrink-0 bg-[#c8d8d5]" />
      </div>
    </div>
  );
};

export default App;
